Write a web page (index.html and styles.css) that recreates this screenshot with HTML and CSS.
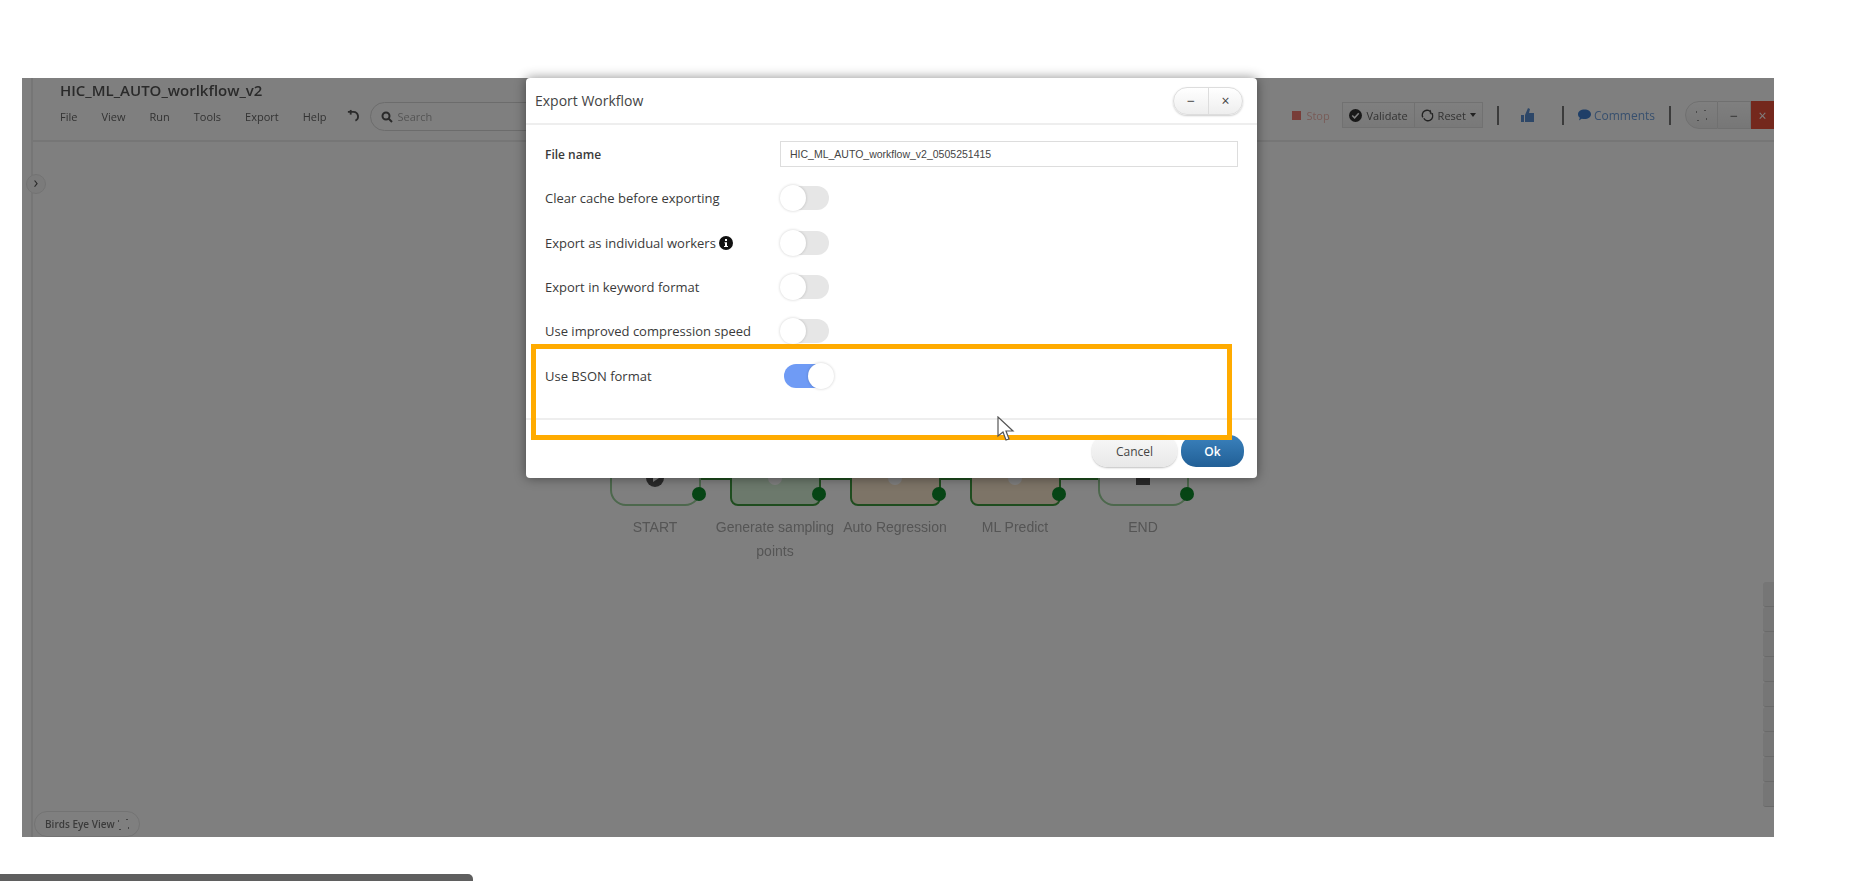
FILE: index.html
```html
<!DOCTYPE html>
<html lang="en">
<head>
    <meta charset="UTF-8">
    <title>Export Workflow</title>
    <link rel="stylesheet" href="styles.css">
</head>
<body>
    <div class="screen">
        <div class="app">
            <div class="side-strip"></div>
            <div class="main">
                <div class="header">
                    <div class="header-left">
                        <h1>HIC_ML_AUTO_worlkflow_v2</h1>
                        <div class="menu">
                            <span>File</span>
                            <span>View</span>
                            <span>Run</span>
                            <span>Tools</span>
                            <span>Export</span>
                            <span>Help</span>
                            <svg class="undo" width="15" height="15" viewBox="0 0 16 16"><path d="M2 3h6a5 5 0 0 1 2 9.500" fill="none" stroke="#555" stroke-width="2"/><path d="M5 1v5" stroke="#555" stroke-width="2"/></svg>
                            <div class="search">
                                <svg width="12" height="12" viewBox="0 0 12 12"><circle cx="5" cy="5" r="3.500" fill="none" stroke="#555" stroke-width="2"/><path d="M7.500 7.500l3.500 3.500" stroke="#555" stroke-width="2"/></svg>
                                <span>Search</span>
                            </div>
                        </div>
                    </div>
                    <div class="toolbar">
                        <span class="tool-stop"><i class="stop-icon"></i>Stop</span>
                        <div class="btn-pair">
                            <span class="tool-btn">
                                <svg width="13" height="13" viewBox="0 0 14 14"><circle cx="7" cy="7" r="7" fill="#333"/><path d="M3.500 7l2.500 2.500 4.500-5" fill="none" stroke="#fff" stroke-width="1.600"/></svg>
                                Validate
                            </span>
                            <span class="tool-btn">
                                <svg width="13" height="13" viewBox="0 0 14 14"><path d="M2 9a5 5 0 0 1 9-5M12 5a5 5 0 0 1-9 5" fill="none" stroke="#444" stroke-width="1.400"/><path d="M10 1v4h3" fill="none" stroke="#444"/></svg>
                                Reset
                                <i class="caret"></i>
                            </span>
                        </div>
                        <i class="tool-sep"></i>
                        <svg class="thumb" width="13" height="14" viewBox="0 0 13 14"><path d="M0 7h3v7H0zM4 7l3-7 2 1-1 4h5v9H4z" fill="#5b8fd0"/></svg>
                        <i class="tool-sep"></i>
                        <span class="comments">
                            <svg width="13" height="12" viewBox="0 0 14 12"><path d="M7 0c4 0 7 2 7 5.200s-3 5.200-7 5.200c-1 0-2 0-3-.4L1 12l1-3C.6 8 0 6.800 0 5.200 0 2 3 0 7 0z" fill="#3f7fd0"/></svg>
                            Comments
                        </span>
                        <i class="tool-sep"></i>
                        <div class="win-btns">
                            <span class="win-btn win-first">
                                <svg width="11" height="11" viewBox="0 0 11 11"><path d="M0 3V0h3M8 0h3v3M11 8v3H8M3 11H0V8" fill="none" stroke="#777" stroke-width="1.500" stroke-dasharray="2 9"/></svg>
                            </span>
                            <span class="win-btn">&minus;</span>
                            <span class="win-btn win-close">&times;</span>
                        </div>
                    </div>
                </div>

                <div class="canvas">
                    <span class="collapse">&rsaquo;</span>

                    <div class="flow">
                        <i class="flow-line"></i>
                        <div class="flow-item">
                            <div class="node">
                                <svg width="18" height="18" viewBox="0 0 18 18"><circle cx="9" cy="9" r="9" fill="#555"/><path d="M7 5l6 4-6 4z" fill="#fff"/></svg>
                                <i class="check"></i>
                            </div>
                            <div class="node-label">START</div>
                        </div>
                        <div class="flow-item">
                            <div class="node node-green">
                                <i class="node-glyph"></i>
                                <i class="check"></i>
                            </div>
                            <div class="node-label">Generate sampling points</div>
                        </div>
                        <div class="flow-item">
                            <div class="node node-tan">
                                <i class="node-glyph"></i>
                                <i class="check"></i>
                            </div>
                            <div class="node-label">Auto Regression</div>
                        </div>
                        <div class="flow-item">
                            <div class="node node-tan">
                                <i class="node-glyph"></i>
                                <i class="check"></i>
                            </div>
                            <div class="node-label">ML Predict</div>
                        </div>
                        <div class="flow-item flow-end">
                            <div class="node">
                                <i class="end-square"></i>
                                <i class="check"></i>
                            </div>
                            <div class="node-label">END</div>
                        </div>
                    </div>

                    <div class="side-tabs">
                        <i></i><i></i><i></i><i></i><i></i><i></i><i></i><i></i><i></i>
                    </div>

                    <div class="birds-eye">
                        Birds Eye View
                        <svg width="11" height="11" viewBox="0 0 11 11"><path d="M0 3V0h3M8 0h3v3M11 8v3H8M3 11H0V8" fill="none" stroke="#666" stroke-width="1.500" stroke-dasharray="2 9"/></svg>
                    </div>
                </div>
            </div>
            <div class="backdrop"></div>
        </div>

        <div class="modal">
            <div class="modal-header">
                <span class="modal-title">Export Workflow</span>
                <div class="modal-btns">
                    <span>&minus;</span>
                    <span>&times;</span>
                </div>
            </div>
            <div class="modal-body">
                <div class="row">
                    <label class="row-label label-strong">File name</label>
                    <input class="file-input" type="text" value="HIC_ML_AUTO_workflow_v2_0505251415">
                </div>
                <div class="row">
                    <label class="row-label">Clear cache before exporting</label>
                    <span class="toggle"></span>
                </div>
                <div class="row">
                    <label class="row-label">Export as individual workers
                        <svg class="info" width="14" height="14" viewBox="0 0 14 14"><circle cx="7" cy="7" r="7" fill="#111"/><path d="M6 3h2v2H6zM5.500 6.200H8V10h1v1H5v-1h1V7.200h-.5z" fill="#fff"/></svg>
                    </label>
                    <span class="toggle"></span>
                </div>
                <div class="row">
                    <label class="row-label">Export in keyword format</label>
                    <span class="toggle"></span>
                </div>
                <div class="row">
                    <label class="row-label">Use improved compression speed</label>
                    <span class="toggle"></span>
                </div>
                <div class="row">
                    <label class="row-label">Use BSON format</label>
                    <span class="toggle toggle-on"></span>
                </div>
            </div>
            <div class="modal-footer">
                <button class="btn btn-cancel">Cancel</button>
                <button class="btn btn-ok">Ok</button>
            </div>
            <div class="highlight"></div>
            <svg class="cursor" width="18" height="27" viewBox="0 0 18 27"><path d="M1 1v19l5-4 3 8 3-1-3-8h7z" fill="#fff" stroke="#555" stroke-width="1.200"/></svg>
        </div>
    </div>

    <div class="bottom-bar"></div>
</body>
</html>
```

FILE: styles.css
```css
* {
    margin: 0;
    padding: 0;
    box-sizing: border-box;
}

body {
    font-family: "Open Sans", "Liberation Sans", sans-serif;
    background: #fff;
    height: 881px;
    overflow: hidden;
    position: relative;
}

.screen {
    position: relative;
    width: 1752px;
    height: 759px;
    margin: 78px 0 0 22px;
}

.app {
    display: flex;
    height: 100%;
    position: relative;
    overflow: hidden;
    background: #fff;
    filter: blur(0.7px);
}

.side-strip {
    width: 11px;
    border-right: 2px solid #ececec;
}

.main {
    flex: 1;
    display: flex;
    flex-direction: column;
    min-width: 0;
}

.backdrop {
    position: absolute;
    inset: 0;
    background: rgba(0, 0, 0, 0.5);
}

/* top bar */
.header {
    height: 64px;
    flex-shrink: 0;
    display: flex;
    justify-content: space-between;
    padding-left: 27px;
    border-bottom: 2px solid #ececec;
}

.header-left {
    padding-top: 2px;
}

.header h1 {
    font-size: 15px;
    font-weight: 600;
    line-height: 20px;
    color: #555;
}

.menu {
    display: flex;
    align-items: center;
    margin-top: 2px;
    font-size: 11px;
    color: #666;
}

.menu span {
    margin-right: 24px;
}

.menu .undo {
    margin: 0 9px 0 -5px;
}

.search {
    display: flex;
    align-items: center;
    gap: 5px;
    width: 260px;
    height: 29px;
    padding-left: 10px;
    border: 1px solid #d8d8d8;
    border-radius: 15px;
}

.search span {
    color: #aaa;
}

.toolbar {
    display: flex;
    align-items: center;
    height: 26px;
    margin-top: 24px;
    font-size: 11px;
    color: #666;
}

.tool-stop {
    display: flex;
    align-items: center;
    gap: 5px;
    width: 50px;
    color: #f0b8b0;
}

.stop-icon {
    width: 9px;
    height: 9px;
    background: #f07a70;
}

.btn-pair {
    display: flex;
}

.tool-btn {
    display: flex;
    align-items: center;
    justify-content: center;
    gap: 4px;
    height: 26px;
    padding: 0 6px;
    border: 1px solid #e2e2e2;
    background: linear-gradient(#fff, #f2f2f2);
    white-space: nowrap;
}

.tool-btn + .tool-btn {
    border-left: none;
}

.caret {
    border: 3.5px solid transparent;
    border-top: 4px solid #444;
    border-bottom: none;
}

.tool-sep {
    width: 2px;
    height: 19px;
    margin: 0 14px;
    background: #777;
}

.thumb {
    margin: 0 14px 0 8px;
}

.comments {
    display: flex;
    align-items: center;
    gap: 3px;
    font-size: 12px;
    color: #6f9fdc;
}

.win-btns {
    display: flex;
    height: 28px;
}

.win-btn {
    display: flex;
    align-items: center;
    justify-content: center;
    width: 33px;
    border: 1px solid #e0e0e0;
    border-left: none;
    font-size: 14px;
    background: linear-gradient(#fff, #eee);
}

.win-first {
    border-left: 1px solid #e0e0e0;
    border-radius: 14px 0 0 14px;
}

.win-close {
    width: 23px;
    border: none;
    background: #e8503a;
    color: #fff;
}

/* canvas */
.canvas {
    flex: 1;
    position: relative;
}

.collapse {
    position: absolute;
    left: -7px;
    top: 32px;
    width: 20px;
    height: 20px;
    border: 1px solid #e6e6e6;
    border-radius: 50%;
    background: #f6f6f6;
    font-size: 16px;
    line-height: 15px;
    text-align: center;
    color: #555;
}

.flow {
    position: absolute;
    left: 562px;
    top: 308px;
    display: flex;
}

.flow-line {
    position: absolute;
    left: 60px;
    top: 27px;
    width: 500px;
    height: 3px;
    background: #3d9a3d;
}

.flow-item {
    position: relative;
    width: 120px;
    display: flex;
    flex-direction: column;
    align-items: center;
}

.flow-end {
    margin-left: 8px;
}

.node {
    position: relative;
    width: 91px;
    height: 56px;
    display: flex;
    align-items: center;
    justify-content: center;
    border: 2px solid #9ad09a;
    border-radius: 16px;
    background: #fff;
}

.node-green {
    border-color: #3f9a3f;
    background: #d8f2d8;
    border-radius: 8px;
}

.node-tan {
    border-color: #3f9a3f;
    background: #fbe8cf;
    border-radius: 8px;
}

.node-glyph {
    width: 14px;
    height: 14px;
    border-radius: 50%;
    background: #fff;
}

.end-square {
    width: 14px;
    height: 14px;
    background: #555;
}

.check {
    position: absolute;
    right: -7px;
    bottom: 3px;
    width: 14px;
    height: 14px;
    border-radius: 50%;
    background: #0c8a2a;
}

.node-label {
    margin-top: 9px;
    font-family: "Liberation Sans", sans-serif;
    font-size: 14px;
    line-height: 24px;
    text-align: center;
    color: #aaa;
}

.side-tabs {
    position: absolute;
    right: 0;
    top: 440px;
    display: flex;
    flex-direction: column;
}

.side-tabs i {
    width: 11px;
    height: 25px;
    background: #ececec;
    border-bottom: 1px solid #d4d4d4;
    border-radius: 3px 0 0 3px;
}

.birds-eye {
    position: absolute;
    left: 1px;
    bottom: 0;
    display: flex;
    align-items: center;
    gap: 3px;
    height: 26px;
    padding: 0 10px;
    border: 1px solid #e6e6e6;
    border-radius: 13px;
    font-size: 10px;
    font-weight: 600;
    color: #777;
}

/* export dialog */
.modal {
    position: absolute;
    left: 504px;
    top: 0;
    width: 731px;
    height: 400px;
    display: flex;
    flex-direction: column;
    background: #fff;
    border-radius: 4px;
    box-shadow: 0 0 12px rgba(0, 0, 0, 0.45);
    color: #333;
}

.modal-header {
    height: 47px;
    flex-shrink: 0;
    display: flex;
    align-items: center;
    justify-content: space-between;
    padding: 0 14px 0 9px;
    border-bottom: 2px solid #eee;
}

.modal-title {
    font-size: 14px;
    color: #444;
}

.modal-btns {
    display: flex;
    height: 28px;
    border: 1px solid #ddd;
    border-radius: 14px;
    background: linear-gradient(#fff, #eee);
    box-shadow: 0 1px 2px rgba(0, 0, 0, 0.2);
}

.modal-btns span {
    display: flex;
    align-items: center;
    justify-content: center;
    width: 34px;
    font-size: 14px;
    color: #444;
}

.modal-btns span + span {
    border-left: 1px solid #ddd;
}

.modal-body {
    flex: 1;
    padding: 7px 19px 0;
}

.row {
    display: flex;
    align-items: center;
    height: 44.3px;
}

.row-label {
    display: flex;
    align-items: center;
    gap: 3px;
    width: 235px;
    flex-shrink: 0;
    font-size: 13px;
    white-space: nowrap;
    color: #3a3a3a;
}

.label-strong {
    font-size: 12px;
    font-weight: 600;
}

.file-input {
    width: 458px;
    height: 26px;
    padding-left: 9px;
    border: 1px solid #ddd;
    outline: none;
    font-family: "Liberation Sans", sans-serif;
    font-size: 10.5px;
    color: #444;
}

.toggle {
    position: relative;
    width: 48px;
    height: 24px;
    margin-left: 1px;
    border-radius: 12px;
    background: #e6e6e6;
}

.toggle::after {
    content: "";
    position: absolute;
    left: -1px;
    top: -1px;
    width: 26px;
    height: 26px;
    border-radius: 50%;
    background: #fff;
    box-shadow: 0 0 3px rgba(0, 0, 0, 0.2);
}

.toggle-on {
    margin-left: 4px;
    background: #6f9bf5;
}

.toggle-on::after {
    left: auto;
    right: -2px;
}

.modal-footer {
    height: 60px;
    flex-shrink: 0;
    display: flex;
    justify-content: flex-end;
    gap: 4px;
    padding: 15px 13px 0 0;
    border-top: 2px solid #eee;
}

.btn {
    height: 32px;
    border: none;
    border-radius: 15px;
    font-family: "Open Sans", sans-serif;
    font-size: 12px;
}

.btn-cancel {
    width: 85px;
    background: linear-gradient(#f8f8f8, #e8e8e8);
    box-shadow: 0 1px 2px rgba(0, 0, 0, 0.25);
    color: #444;
}

.btn-ok {
    width: 63px;
    background: linear-gradient(#3b82bd, #215f96);
    color: #fff;
    font-weight: 600;
}

.highlight {
    position: absolute;
    left: 5px;
    top: 266px;
    width: 701px;
    height: 96px;
    border: 5px solid #ffab00;
}

.cursor {
    position: absolute;
    left: 471px;
    top: 338px;
}

.bottom-bar {
    position: absolute;
    left: 0;
    bottom: 0;
    width: 473px;
    height: 7px;
    background: #5f5f5f;
    border-radius: 0 5px 0 0;
}
```
